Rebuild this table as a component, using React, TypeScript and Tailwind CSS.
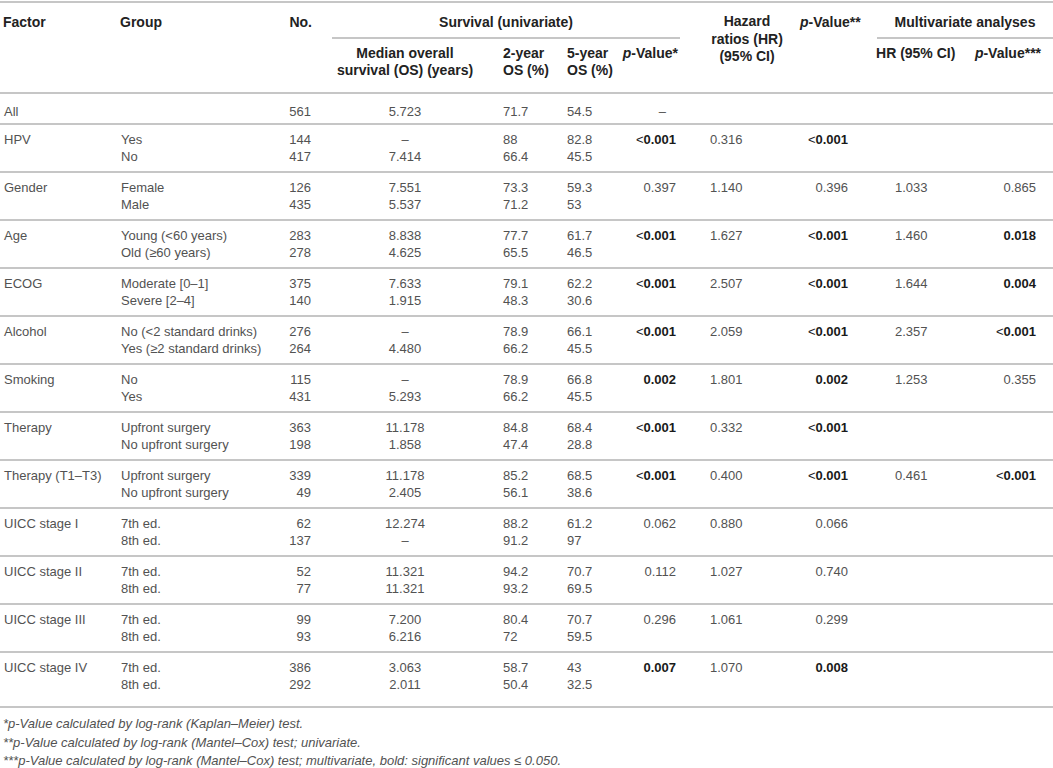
import React from 'react';

type PVal = [string, boolean] | null;

interface FactorRow {
  factor: string;
  groups: string[];
  n: string[];
  median: string[];
  os2: string[];
  os5: string[];
  p1: PVal;
  hr: string;
  p2: PVal;
  mhr: string;
  p3: PVal;
}

const rows: FactorRow[] = [
  { factor: 'HPV', groups: ['Yes', 'No'], n: ['144', '417'], median: ['–', '7.414'], os2: ['88', '66.4'], os5: ['82.8', '45.5'], p1: ['<0.001', true], hr: '0.316', p2: ['<0.001', true], mhr: '', p3: null },
  { factor: 'Gender', groups: ['Female', 'Male'], n: ['126', '435'], median: ['7.551', '5.537'], os2: ['73.3', '71.2'], os5: ['59.3', '53'], p1: ['0.397', false], hr: '1.140', p2: ['0.396', false], mhr: '1.033', p3: ['0.865', false] },
  { factor: 'Age', groups: ['Young (<60 years)', 'Old (≥60 years)'], n: ['283', '278'], median: ['8.838', '4.625'], os2: ['77.7', '65.5'], os5: ['61.7', '46.5'], p1: ['<0.001', true], hr: '1.627', p2: ['<0.001', true], mhr: '1.460', p3: ['0.018', true] },
  { factor: 'ECOG', groups: ['Moderate [0–1]', 'Severe [2–4]'], n: ['375', '140'], median: ['7.633', '1.915'], os2: ['79.1', '48.3'], os5: ['62.2', '30.6'], p1: ['<0.001', true], hr: '2.507', p2: ['<0.001', true], mhr: '1.644', p3: ['0.004', true] },
  { factor: 'Alcohol', groups: ['No (<2 standard drinks)', 'Yes (≥2 standard drinks)'], n: ['276', '264'], median: ['–', '4.480'], os2: ['78.9', '66.2'], os5: ['66.1', '45.5'], p1: ['<0.001', true], hr: '2.059', p2: ['<0.001', true], mhr: '2.357', p3: ['<0.001', true] },
  { factor: 'Smoking', groups: ['No', 'Yes'], n: ['115', '431'], median: ['–', '5.293'], os2: ['78.9', '66.2'], os5: ['66.8', '45.5'], p1: ['0.002', true], hr: '1.801', p2: ['0.002', true], mhr: '1.253', p3: ['0.355', false] },
  { factor: 'Therapy', groups: ['Upfront surgery', 'No upfront surgery'], n: ['363', '198'], median: ['11.178', '1.858'], os2: ['84.8', '47.4'], os5: ['68.4', '28.8'], p1: ['<0.001', true], hr: '0.332', p2: ['<0.001', true], mhr: '', p3: null },
  { factor: 'Therapy (T1–T3)', groups: ['Upfront surgery', 'No upfront surgery'], n: ['339', '49'], median: ['11.178', '2.405'], os2: ['85.2', '56.1'], os5: ['68.5', '38.6'], p1: ['<0.001', true], hr: '0.400', p2: ['<0.001', true], mhr: '0.461', p3: ['<0.001', true] },
  { factor: 'UICC stage I', groups: ['7th ed.', '8th ed.'], n: ['62', '137'], median: ['12.274', '–'], os2: ['88.2', '91.2'], os5: ['61.2', '97'], p1: ['0.062', false], hr: '0.880', p2: ['0.066', false], mhr: '', p3: null },
  { factor: 'UICC stage II', groups: ['7th ed.', '8th ed.'], n: ['52', '77'], median: ['11.321', '11.321'], os2: ['94.2', '93.2'], os5: ['70.7', '69.5'], p1: ['0.112', false], hr: '1.027', p2: ['0.740', false], mhr: '', p3: null },
  { factor: 'UICC stage III', groups: ['7th ed.', '8th ed.'], n: ['99', '93'], median: ['7.200', '6.216'], os2: ['80.4', '72'], os5: ['70.7', '59.5'], p1: ['0.296', false], hr: '1.061', p2: ['0.299', false], mhr: '', p3: null },
  { factor: 'UICC stage IV', groups: ['7th ed.', '8th ed.'], n: ['386', '292'], median: ['3.063', '2.011'], os2: ['58.7', '50.4'], os5: ['43', '32.5'], p1: ['0.007', true], hr: '1.070', p2: ['0.008', true], mhr: '', p3: null },
];

const PValue = ({ v }: { v: PVal }) => {
  if (!v) return null;
  const [text, bold] = v;
  if (!bold) return <span>{text}</span>;
  if (text.startsWith('<')) {
    return (
      <span className="text-[#1a1a1a]">
        &lt;<span className="font-bold">{text.slice(1)}</span>
      </span>
    );
  }
  return <span className="font-bold text-[#1a1a1a]">{text}</span>;
};

const Lines = ({ items }: { items: string[] }) => (
  <>
    {items.map((t, i) => (
      <div key={i}>{t}</div>
    ))}
  </>
);

export default function App() {
  const h2 = 'align-top pt-[6px] pb-[13px] leading-[17px] whitespace-nowrap';
  const allCell = 'align-top pt-[9px] pb-[3px] leading-[17px]';

  return (
    <div className="w-[1053px] bg-white pt-px font-['Liberation_Sans',Arial,sans-serif] text-[13px] text-[#525252]">
      <table className="w-[1053px] table-fixed border-collapse">
        <colgroup>
          <col className="w-[117px]" />
          <col className="w-[145px]" />
          <col className="w-[58px]" />
          <col className="w-[170px]" />
          <col className="w-[70px]" />
          <col className="w-[50px]" />
          <col className="w-[80px]" />
          <col className="w-[110px]" />
          <col className="w-[70px]" />
          <col className="w-[90px]" />
          <col className="w-[93px]" />
        </colgroup>

        {/* Header */}
        <thead className="font-bold text-[14px] text-[#222]">
          <tr className="border-t-2 border-[#c6c6c6]">
            <th rowSpan={2} className="align-top pt-[10px] pl-[3px] text-left leading-[18px]">Factor</th>
            <th rowSpan={2} className="align-top pt-[10px] pl-[3px] text-left leading-[18px]">Group</th>
            <th rowSpan={2} className="align-top pt-[10px] pr-[8px] text-right leading-[18px]">No.</th>
            <th colSpan={4} className="align-top p-0">
              <div className="ml-[12px] mr-[10px] pt-[10px] pb-[6px] border-b-2 border-[#c6c6c6] text-center leading-[18px] whitespace-nowrap">
                Survival (univariate)
              </div>
            </th>
            <th rowSpan={2} className="align-top pt-[10px] pl-[4px] text-center leading-[17.5px] whitespace-nowrap">
              Hazard
              <br />
              ratios (HR)
              <br />
              (95% CI)
            </th>
            <th rowSpan={2} className="align-top pt-[10px] pr-[15px] text-right leading-[18px] whitespace-nowrap">
              <i>p</i>-Value**
            </th>
            <th colSpan={2} className="align-top p-0">
              <div className="ml-[7px] pt-[10px] pb-[6px] border-b-2 border-[#c6c6c6] text-center leading-[18px] whitespace-nowrap">
                Multivariate analyses
              </div>
            </th>
          </tr>
          <tr className="border-b-2 border-[#c6c6c6]">
            <th className={`${h2} text-center`}>
              Median overall
              <br />
              survival (OS) (years)
            </th>
            <th className={`${h2} pl-[13px] text-left`}>
              2-year
              <br />
              OS (%)
            </th>
            <th className={`${h2} pl-[7px] text-left`}>
              5-year
              <br />
              OS (%)
            </th>
            <th className={`${h2} pr-[12px] text-right`}>
              <i>p</i>-Value*
            </th>
            <th className={`${h2} pl-[6px] text-left`}>HR (95% CI)</th>
            <th className={`${h2} pr-[12px] text-right`}>
              <i>p</i>-Value***
            </th>
          </tr>
        </thead>

        <tbody>
          <tr className="border-b-2 border-[#c6c6c6]">
            <td className={`${allCell} pl-[4px]`}>All</td>
            <td />
            <td className={`${allCell} pr-[9px] text-right`}>561</td>
            <td className={`${allCell} text-center`}>5.723</td>
            <td className={`${allCell} pl-[13px]`}>71.7</td>
            <td className={`${allCell} pl-[7px]`}>54.5</td>
            <td className={`${allCell} pr-[24px] text-right`}>–</td>
            <td />
            <td />
            <td />
            <td />
          </tr>
          {rows.map((r, idx) => {
            const td = `align-top pt-[6px] leading-[17px] ${idx === rows.length - 1 ? 'pb-[13px]' : 'pb-[6px]'}`;
            return (
              <tr key={r.factor} className="border-b-2 border-[#c6c6c6]">
                <td className={`${td} pl-[4px] whitespace-nowrap`}>{r.factor}</td>
                <td className={`${td} pl-[4px] whitespace-nowrap`}>
                  <Lines items={r.groups} />
                </td>
                <td className={`${td} pr-[9px] text-right`}>
                  <Lines items={r.n} />
                </td>
                <td className={`${td} text-center`}>
                  <Lines items={r.median} />
                </td>
                <td className={`${td} pl-[13px]`}>
                  <Lines items={r.os2} />
                </td>
                <td className={`${td} pl-[7px]`}>
                  <Lines items={r.os5} />
                </td>
                <td className={`${td} pr-[14px] text-right`}>
                  <PValue v={r.p1} />
                </td>
                <td className={`${td} pl-[20px]`}>{r.hr}</td>
                <td className={`${td} pr-[22px] text-right`}>
                  <PValue v={r.p2} />
                </td>
                <td className={`${td} pl-[25px]`}>{r.mhr}</td>
                <td className={`${td} pr-[17px] text-right`}>
                  <PValue v={r.p3} />
                </td>
              </tr>
            );
          })}
        </tbody>
      </table>

      {/* Footnotes */}
      <div className="pt-[7px] pl-[3px] text-[13px] italic leading-[18.5px] text-[#525252]">
        <p>*p-Value calculated by log-rank (Kaplan–Meier) test.</p>
        <p>**p-Value calculated by log-rank (Mantel–Cox) test; univariate.</p>
        <p>***p-Value calculated by log-rank (Mantel–Cox) test; multivariate, bold: significant values ≤ 0.050.</p>
      </div>
    </div>
  );
}
